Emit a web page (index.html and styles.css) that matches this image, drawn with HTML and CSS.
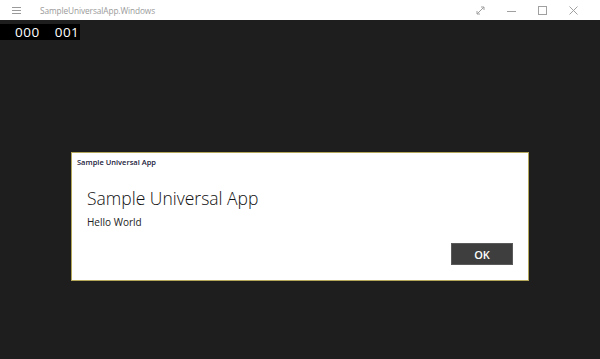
FILE: index.html
```html
<!DOCTYPE html>
<html>
<head>
<meta charset="utf-8">
<link rel="stylesheet" href="styles.css">
</head>
<body>
<div class="window">
  <div class="titlebar">
    <div class="tb-left">
      <svg class="hamb" width="9" height="7" viewBox="0 0 9 7"><path d="M0 0.5H9M0 3.5H9M0 6.5H9" stroke="#9a9a9a" stroke-width="1"/></svg>
      <span class="tb-title">SampleUniversalApp.Windows</span>
    </div>
    <div class="tb-right">
      <span class="tb-btn"><svg width="9" height="9" viewBox="0 0 9 9"><path d="M1 8L8 1M5 1H8V4M1 5V8H4" fill="none" stroke="#a0a0a0" stroke-width="1"/></svg></span>
      <span class="tb-btn"><svg width="9" height="9" viewBox="0 0 9 9"><path d="M0 5.5H9" stroke="#a0a0a0" stroke-width="1"/></svg></span>
      <span class="tb-btn"><svg width="9" height="9" viewBox="0 0 9 9"><rect x="0.5" y="0.5" width="8" height="8" fill="none" stroke="#a0a0a0" stroke-width="1"/></svg></span>
      <span class="tb-btn"><svg width="9" height="9" viewBox="0 0 9 9"><path d="M0.5 0.5L8.5 8.5M8.5 0.5L0.5 8.5" stroke="#a0a0a0" stroke-width="1"/></svg></span>
    </div>
  </div>
  <div class="content">
    <div class="counter"><span>000</span><span>001</span></div>
    <div class="overlay">
      <div class="dialog">
        <div class="dlg-caption">Sample Universal App</div>
        <div class="dlg-body">
          <div class="dlg-heading">Sample Universal App</div>
          <div class="dlg-text">Hello World</div>
        </div>
        <div class="dlg-actions"><button class="ok">OK</button></div>
      </div>
    </div>
  </div>
</div>
</body>
</html>
```
FILE: styles.css
```css
html, body { margin: 0; padding: 0; }
body { width: 600px; height: 359px; overflow: hidden; font-family: "Open Sans", "Liberation Sans", sans-serif; }
.window { display: flex; flex-direction: column; height: 359px; }
.titlebar { height: 20px; background: #fff; display: flex; justify-content: space-between; align-items: center; flex-shrink: 0; }
.tb-left { display: flex; align-items: center; }
.hamb { margin-left: 12px; margin-right: 19px; }
.tb-title { font-size: 8.3px; color: #9a9a9a; letter-spacing: -0.1px; }
.tb-right { display: flex; align-items: center; margin-right: 11px; }
.tb-btn { width: 31px; display: flex; justify-content: center; }
.content { flex: 1; background: #1e1e1e; position: relative; }
.counter { display: inline-flex; gap: 15px; background: #000; padding: 0 0 0 15px; width: 65px; height: 16px; align-items: center; color: #fff; font-size: 13.5px; font-family: "Open Sans", sans-serif; letter-spacing: 0.5px; }
.counter span { line-height: 16px; }
.overlay { position: absolute; left: 0; top: 0; right: 0; bottom: 0; display: flex; align-items: flex-start; justify-content: center; padding-top: 132px; }
.dialog { width: 456px; height: 127px; background: #fff; border: 1px solid #b5a75a; box-sizing: content-box; display: flex; flex-direction: column; }
.dlg-caption { font-size: 7.5px; font-weight: 600; color: #1a1a3a; padding: 4px 0 0 5px; height: 14px; }
.dlg-body { padding: 15px 0 0 15px; }
.dlg-heading { font-family: "Open Sans", sans-serif; font-weight: 300; font-size: 17.5px; color: #111; line-height: 24px; }
.dlg-text { font-size: 10px; color: #222; margin-top: 5px; }
.dlg-actions { display: flex; justify-content: flex-end; padding: 14px 15px 0 0; }
.ok { width: 62px; height: 22px; background: #3e3e3e; border: 1px solid #5a5a5a; color: #fff; font-family: "Open Sans", sans-serif; font-weight: 600; font-size: 11px; padding: 0; }
```
